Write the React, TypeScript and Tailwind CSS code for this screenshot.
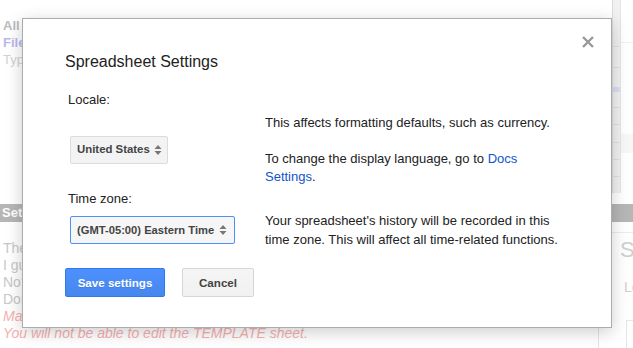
import React from 'react'

function Arrows() {
  return (
    <svg width="8" height="12" viewBox="0 0 8 12" className="shrink-0">
      <path d="M4 1 L7.5 5 L0.5 5 Z" fill="#777" />
      <path d="M4 11 L7.5 7 L0.5 7 Z" fill="#777" />
    </svg>
  )
}

function Background() {
  return (
    <div className="absolute inset-0 flex flex-col text-[14px]">
      <div className="flex h-[204px]">
        <div className="flex-1 pl-[3px] pt-[17px] text-[13px] leading-[17px]">
          <div className="font-bold text-[#bcbcbc]">All</div>
          <div className="font-bold text-[#b8b8ef]">Files</div>
          <div className="text-[#d2d2d2]">Type</div>
        </div>
        <div className="w-[21px] h-[193px] flex border-l border-[#dcdcdc]">
          <div className="w-[8px] flex flex-col bg-[#f1f1f1] border-r border-[#e6e6e6]">
            <div className="h-[47px] border-b border-[#e2e2e2]" />
            <div className="h-[21px] border-b border-[#e2e2e2]" />
            <div className="h-[19px]" />
            <div className="h-[5px] bg-[#d8def5]" />
            <div className="h-[16px] border-b border-[#e2e2e2]" />
            <div className="h-[17px] border-b border-[#e2e2e2]" />
            <div className="h-[18px] border-b border-[#e2e2e2]" />
            <div className="h-[17px] border-b border-[#e2e2e2]" />
            <div className="h-[17px] border-b border-[#e2e2e2]" />
            <div className="flex-1" />
          </div>
          <div className="flex-1 flex flex-col">
            <div className="h-[43px] border-b border-[#f0f0f0]" />
            <div className="h-[91px]" />
            <div className="h-[19px] bg-[#f7f7f7]" />
          </div>
        </div>
      </div>
      <div className="h-[18px] bg-[#b6b6b6] pl-[2px] text-[13px] font-bold leading-[18px] text-white">
        Setup
      </div>
      <div className="flex flex-1">
        <div className="flex-1 pl-[3px] pt-[18px] leading-[17px]">
          <div className="text-[#c8c8c8]">There</div>
          <div className="text-[#c8c8c8]">I guess</div>
          <div className="text-[#c8c8c8]">No?</div>
          <div className="text-[#c8c8c8]">Done</div>
          <div className="italic text-[#f7b0b0]">Make</div>
          <div className="italic text-[#f7b0b0]">You will not be able to edit the TEMPLATE sheet.</div>
        </div>
        <div className="w-[35px] border-l border-[#e4e4e4] flex flex-col">
          <div className="h-[11px] border-b border-[#ececec] ml-[13px]" />
          <div className="pl-[21px] pt-[4px] text-[22px] leading-[26px] text-[#cfcfcf]">S</div>
          <div className="pl-[25px] pt-[14px] text-[14px] text-[#cfcfcf]">Lo</div>
          <div className="ml-[27px] mt-[22px] flex-1 border-l border-t border-[#e6e6e6]" />
        </div>
      </div>
    </div>
  )
}

export default function App() {
  return (
    <div
      className="relative w-[633px] h-[348px] overflow-hidden bg-white"
      style={{ fontFamily: '"Liberation Sans", Arial, sans-serif' }}
    >
      <Background />

      <div className="absolute left-[22px] top-[18px] w-[590px] h-[310px] bg-white border border-[#acacac] shadow-[0_4px_16px_rgba(0,0,0,0.2)] px-[42px] pt-[33px] text-[#222]">
        <button className="absolute right-[16px] top-[16px] w-[14px] h-[14px] flex items-center justify-center">
          <svg width="12" height="12" viewBox="0 0 12 12">
            <path d="M1 1 L11 11 M11 1 L1 11" stroke="#999" strokeWidth="2.4" />
          </svg>
        </button>

        <h2 className="text-[16px] leading-[20px]">Spreadsheet Settings</h2>

        <div className="flex">
          <div className="w-[200px] flex flex-col items-start text-[13px]">
            <div className="mt-[20px] pl-[3px] leading-[16px]">Locale:</div>
            <div className="mt-[28px] ml-[5px] h-[28px] w-[98px] flex items-center justify-between pl-[6px] pr-[5px] bg-[#f3f3f3] border border-[#dcdcdc] rounded-[2px] text-[11.4px] font-bold text-[#444]">
              <span>United States</span>
              <Arrows />
            </div>
            <div className="mt-[27px] pl-[3px] leading-[16px]">Time zone:</div>
            <div className="mt-[9px] ml-[5px] h-[28px] w-[165px] flex items-center justify-between pl-[6px] pr-[7px] bg-[#f6f6f6] border border-[#4d90fe] rounded-[2px] text-[11.2px] font-bold text-[#444]">
              <span>(GMT-05:00) Eastern Time</span>
              <Arrows />
            </div>
            <div className="mt-[24px] flex gap-[17px]">
              <button className="h-[29px] w-[100px] rounded-[2px] border border-[#3079ed] bg-gradient-to-b from-[#4d90fe] to-[#4787ed] text-[11.6px] font-bold text-white [text-shadow:0_1px_rgba(0,0,0,0.1)]">
                Save settings
              </button>
              <button className="h-[29px] w-[72px] rounded-[2px] border border-[#d6d6d6] bg-gradient-to-b from-[#f5f5f5] to-[#f1f1f1] text-[11.6px] font-bold text-[#444]">
                Cancel
              </button>
            </div>
          </div>

          <div className="flex-1 text-[13px] leading-[18px]">
            <p className="mt-[42px]">This affects formatting defaults, such as currency.</p>
            <p className="mt-[18px] w-[290px]">
              To change the display language, go to <a className="text-[#15c]">Docs Settings</a>.
            </p>
            <p className="mt-[25px] w-[300px] leading-[19px]">
              Your spreadsheet's history will be recorded in this time zone. This will affect all time-related functions.
            </p>
          </div>
        </div>
      </div>
    </div>
  )
}
